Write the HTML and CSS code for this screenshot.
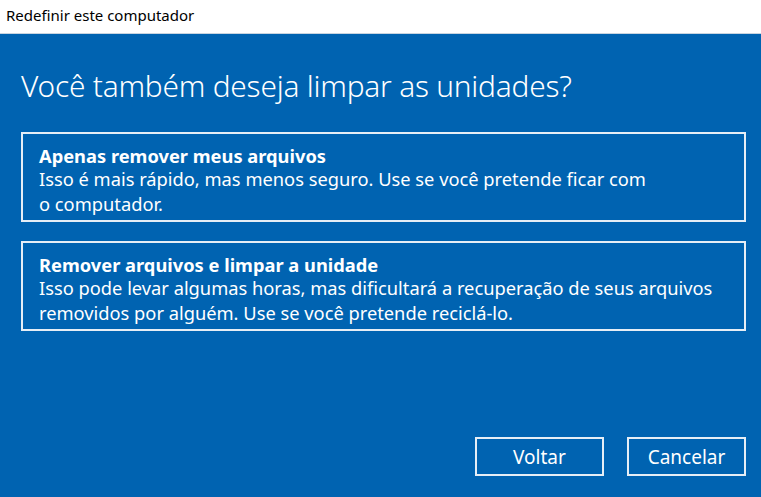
FILE: index.html
```html
<!DOCTYPE html>
<html lang="pt-BR">
<head>
<meta charset="utf-8">
<title>Redefinir este computador</title>
<link rel="stylesheet" href="styles.css">
</head>
<body>
<div class="window">
  <header class="titlebar">Redefinir este computador</header>
  <main class="content">
    <h1 class="heading">Você também deseja limpar as unidades?</h1>
    <div class="options">
      <button class="option">
        <span class="option-title">Apenas remover meus arquivos</span>
        <span class="option-desc">Isso é mais rápido, mas menos seguro. Use se você pretende ficar com<br>o computador.</span>
      </button>
      <button class="option">
        <span class="option-title">Remover arquivos e limpar a unidade</span>
        <span class="option-desc">Isso pode levar algumas horas, mas dificultará a recuperação de seus arquivos<br>removidos por alguém. Use se você pretende reciclá-lo.</span>
      </button>
    </div>
    <div class="actions">
      <button class="btn btn-back">Voltar</button>
      <button class="btn btn-cancel">Cancelar</button>
    </div>
  </main>
</div>
</body>
</html>
```
FILE: styles.css
```css
html, body {
  margin: 0;
  padding: 0;
  width: 761px;
  height: 497px;
  overflow: hidden;
  font-family: "Noto Sans", "Open Sans", sans-serif;
}
.window {
  display: flex;
  flex-direction: column;
  height: 497px;
}
.titlebar {
  height: 34px;
  box-sizing: border-box;
  padding: 5px 0 0 6px;
  background: #ffffff;
  color: #000000;
  font-size: 15px;
  line-height: 20px;
  border-bottom: 1px solid #c8d4e0;
}
.content {
  flex: 1;
  background: #0063b1;
  color: #ffffff;
  padding: 0 15px 0 21px;
  display: flex;
  flex-direction: column;
}
.heading {
  margin: 32px 0 0 0;
  font-weight: 300;
  font-size: 29.8px;
  line-height: 40px;
  letter-spacing: -0.2px;
}
.options {
  margin-top: 26px;
  display: flex;
  flex-direction: column;
  gap: 19px;
}
.option {
  display: flex;
  flex-direction: column;
  align-items: flex-start;
  text-align: left;
  height: 90px;
  box-sizing: border-box;
  border: 2px solid #e6eef6;
  background: transparent;
  color: #ffffff;
  padding: 10px 16px 0 16px;
  font-family: inherit;
  margin: 0;
}
.option-title {
  font-weight: 700;
  font-size: 18.3px;
  line-height: 23px;
}
.option-desc {
  font-size: 18.3px;
  line-height: 24.5px;
}
.actions {
  margin-top: auto;
  margin-bottom: 21px;
  display: flex;
  justify-content: flex-end;
  gap: 23px;
}
.btn {
  height: 39px;
  box-sizing: border-box;
  border: 2px solid #e6eef6;
  background: transparent;
  color: #ffffff;
  font-family: inherit;
  font-size: 19px;
  margin: 0;
  padding: 0;
}
.btn-back { width: 129px; }
.btn-cancel { width: 119px; }
```
